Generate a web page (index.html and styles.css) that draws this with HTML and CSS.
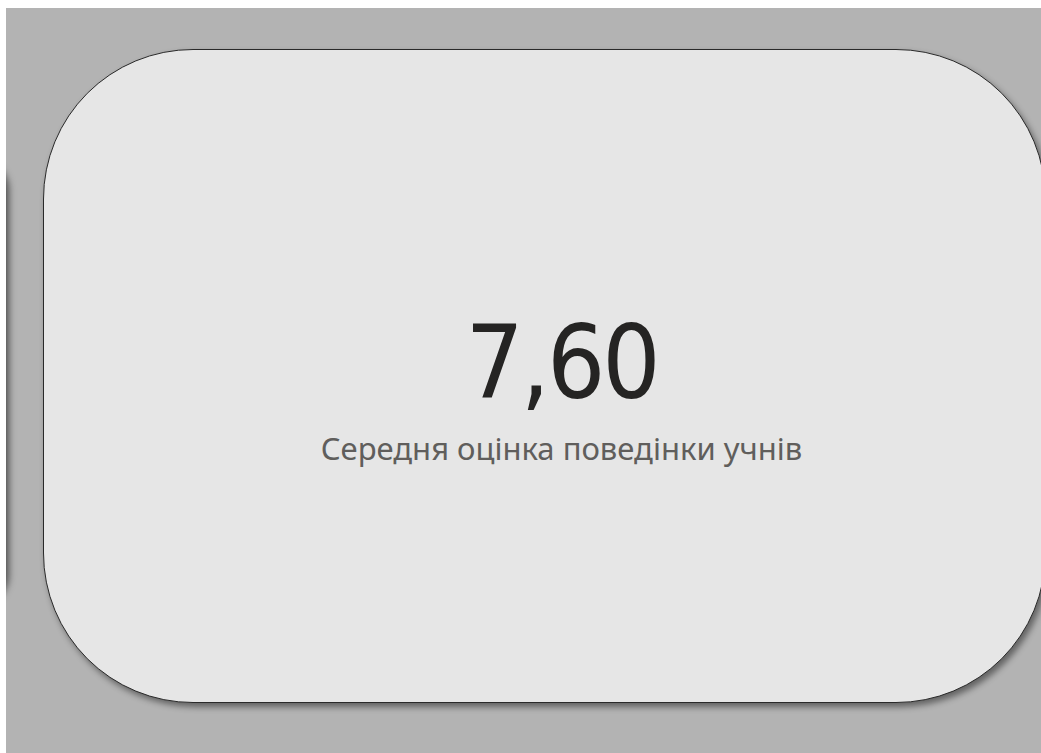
FILE: index.html
```html
<!DOCTYPE html>
<html lang="uk">
<head>
<meta charset="utf-8">
<title>Середня оцінка поведінки учнів</title>
<link rel="stylesheet" href="styles.css">
</head>
<body>
<div class="canvas">
  <div class="card">
    <div class="card-value">7,60</div>
    <div class="card-label">Середня оцінка поведінки учнів</div>
  </div>
</div>
</body>
</html>
```
FILE: styles.css
```css
html, body {
  margin: 0;
  padding: 0;
  background: #ffffff;
  overflow: hidden;
}

.canvas {
  position: relative;
  margin: 8px 0 0 6px;
  height: 745px;
  padding: 41px 0 0 37px;
  box-sizing: border-box;
  background: #b3b3b3;
  overflow: hidden;
}

/* neighbouring visual, scrolled off to the left: only its shadow shows */
.canvas::before {
  content: "";
  position: absolute;
  left: -30px;
  top: 150px;
  width: 30px;
  height: 445px;
  border-radius: 0 40px 40px 0;
  background: #e6e6e6;
  box-shadow: 3px 2px 7px rgba(0, 0, 0, 0.55);
}

.card {
  width: 1003px;
  height: 654px;
  box-sizing: border-box;
  border: 1.5px solid #2a2a2a;
  border-radius: 150px;
  background: #e6e6e6;
  box-shadow: 3px 4px 6px rgba(0, 0, 0, 0.45);
  display: flex;
  flex-direction: column;
  align-items: center;
  justify-content: center;
  padding: 27px 0 0 34px;
}

.card-value {
  font-family: "DejaVu Sans Condensed", "DejaVu Sans", sans-serif;
  font-stretch: condensed;
  font-size: 102px;
  letter-spacing: -3px;
  line-height: 1;
  color: #252423;
}

.card-label {
  margin-top: 16px;
  font-family: "Noto Sans", "Open Sans", sans-serif;
  font-size: 31px;
  line-height: 1.2;
  color: #605e5c;
}
```
